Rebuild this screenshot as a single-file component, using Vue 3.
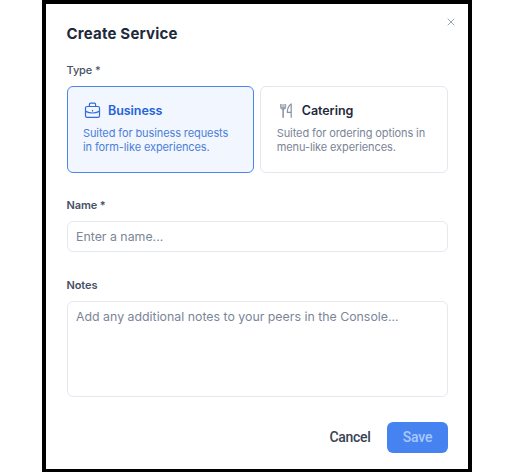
<template>
  <div class="modal">
    <header class="header">
      <h1>Create Service</h1>
      <button class="close" type="button" aria-label="Close" @click="reset">
        <svg width="8" height="8" viewBox="0 0 8 8">
          <path d="M0.7 0.7 L7.3 7.3 M7.3 0.7 L0.7 7.3" />
        </svg>
      </button>
    </header>

    <div class="label type-label">Type *</div>
    <div class="types">
      <div
        v-for="item in types"
        :key="item.id"
        class="type"
        :class="[item.id, { selected: type === item.id }]"
        @click="type = item.id"
      >
        <div class="type-head">
          <svg v-if="item.id === 'business'" class="icon" width="17" height="17" viewBox="0 0 17 17">
            <rect x="1.5" y="4.5" width="14" height="10.8" rx="1.6" />
            <path d="M5.4 4.3 V2.5 Q5.4 1.2 6.7 1.2 H10.3 Q11.6 1.2 11.6 2.5 V4.3" />
            <path d="M1.7 9.4 Q8.5 12.6 15.3 9.4" />
            <path d="M8.5 8.3 V8.9" />
          </svg>
          <svg v-else class="icon" width="17" height="17" viewBox="0 0 17 17">
            <path class="fill" d="M2 2 H8.2 V5 Q8.2 7.4 6.2 7.7 H4 Q2 7.4 2 5 Z" />
            <path class="gap" d="M4.1 1.6 V4.6 M6.1 1.6 V4.6" />
            <path class="handle" d="M5.1 7.4 V15.3" />
            <path d="M13.2 15.3 V1.9 Q9.4 4.3 9.3 10.3 H13.2" />
          </svg>
          <span class="type-name">{{ item.name }}</span>
        </div>
        <p class="desc">{{ item.lines[0] }}<br />{{ item.lines[1] }}</p>
      </div>
    </div>

    <label class="label name-label" for="name">Name *</label>
    <input id="name" v-model="name" type="text" placeholder="Enter a name..." />

    <label class="label notes-label" for="notes">Notes</label>
    <textarea
      id="notes"
      v-model="notes"
      placeholder="Add any additional notes to your peers in the Console..."
    ></textarea>

    <footer class="footer">
      <button class="cancel" type="button" @click="reset">Cancel</button>
      <button class="save" type="button" :disabled="!name">Save</button>
    </footer>
  </div>
</template>

<script setup>
import { ref } from 'vue'

const types = [
  {
    id: 'business',
    name: 'Business',
    lines: ['Suited for business requests', 'in form-like experiences.']
  },
  {
    id: 'catering',
    name: 'Catering',
    lines: ['Suited for ordering options in', 'menu-like experiences.']
  }
]

const type = ref('business')
const name = ref('')
const notes = ref('')

const reset = () => {
  type.value = 'business'
  name.value = ''
  notes.value = ''
}
</script>

<style>
body {
  margin: 0;
  background: #fff;
  overflow: hidden;
}
</style>

<style scoped>
.modal {
  box-sizing: border-box;
  display: flex;
  flex-direction: column;
  width: 430px;
  height: 472px;
  margin-left: 42px;
  padding: 0 20px 0 20.5px;
  border: 4px solid #000;
  border-bottom-width: 3px;
  background: #fff;
  font-family: Inter, 'Liberation Sans', sans-serif;
  color: #1f2a3d;
}

.header {
  display: flex;
  justify-content: space-between;
  height: 56px;
}

h1 {
  margin: 20px 0 0;
  font-size: 15px;
  line-height: 20px;
  font-weight: 700;
  letter-spacing: 0.2px;
  color: #1e293b;
}

button {
  padding: 0;
  border: none;
  background: none;
  font-family: inherit;
  cursor: pointer;
}

.close {
  width: 8px;
  height: 8px;
  margin: 14px -7px 0 0;
  line-height: 0;
}

.close path {
  fill: none;
  stroke: #9aa3b8;
  stroke-width: 1;
}

.label {
  font-size: 11px;
  line-height: 16px;
  height: 16px;
  font-weight: 600;
  letter-spacing: -0.1px;
  color: #475067;
}

.type-label {
  margin-top: 2px;
  font-weight: 500;
}

.types {
  display: flex;
  gap: 6px;
  margin-top: 7.5px;
}

.type {
  box-sizing: border-box;
  flex: 1;
  height: 87px;
  padding: 15px 0 0 15.5px;
  border: 1px solid #e4e7ee;
  border-radius: 6px;
  white-space: nowrap;
  cursor: pointer;
}

.type.selected {
  border-color: #4a86e8;
  background: #f1f6ff;
}

.type-head {
  display: flex;
  align-items: center;
  gap: 7px;
  height: 18px;
  padding-left: 1px;
}

.type-name {
  font-size: 12.5px;
  font-weight: 600;
  letter-spacing: -0.05px;
}

.selected .type-name {
  color: #2563d8;
}

.icon {
  fill: none;
  stroke: #8790a2;
  stroke-width: 1.2;
  stroke-linecap: round;
  stroke-linejoin: round;
}

.selected .icon {
  stroke: #2f6bdc;
}

.icon .fill {
  fill: #9ca4b3;
  stroke: none;
}

.icon .gap {
  stroke: #fff;
  stroke-width: 0.7;
}

.icon .handle {
  stroke-width: 1.5;
}

.desc {
  margin: 6px 0 0;
  font-size: 11px;
  line-height: 14.5px;
  letter-spacing: -0.1px;
  color: #7b8497;
}

.selected .desc {
  color: #4c80d8;
}

.name-label {
  margin-top: 24px;
}

input,
textarea {
  box-sizing: border-box;
  width: 100%;
  padding: 0 8.5px;
  border: 1px solid #e6e8ef;
  border-radius: 6px;
  outline: none;
  background: #fff;
  font-family: inherit;
  font-size: 12.35px;
  color: #1f2a3d;
}

input {
  height: 31px;
  margin-top: 8px;
}

textarea {
  height: 96px;
  margin-top: 8px;
  padding-top: 7px;
  line-height: 16px;
  resize: none;
}

input::placeholder,
textarea::placeholder {
  color: #7b8598;
  opacity: 1;
}

.notes-label {
  margin-top: 25px;
}

.footer {
  display: flex;
  justify-content: flex-end;
  align-items: center;
  gap: 16.5px;
  margin-top: 25px;
}

.cancel {
  font-family: Roboto, sans-serif;
  font-size: 14px;
  font-weight: 500;
  letter-spacing: -0.3px;
  color: #3a4254;
}

.save {
  width: 61px;
  height: 31px;
  border-radius: 6px;
  background: #4783f0;
  font-family: Roboto, sans-serif;
  font-size: 14px;
  font-weight: 500;
  letter-spacing: -0.2px;
  color: #a9c8fc;
}
</style>
